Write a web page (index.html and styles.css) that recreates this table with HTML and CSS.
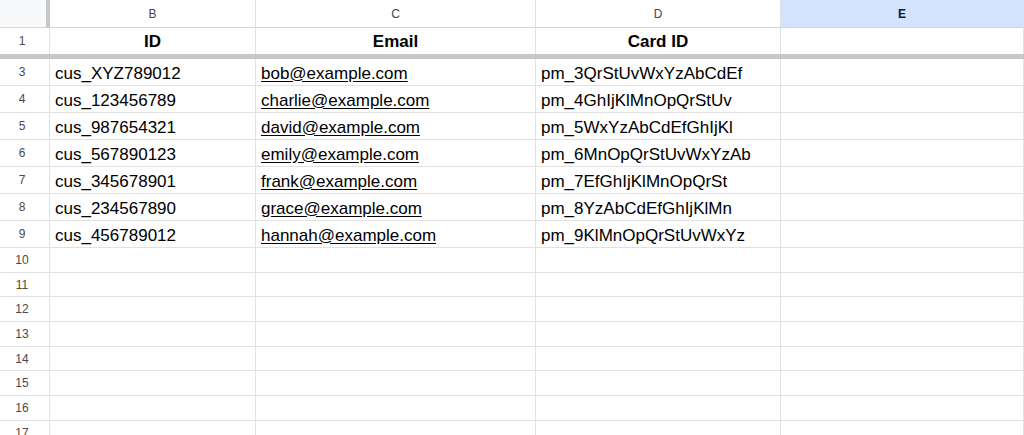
FILE: index.html
```html
<!DOCTYPE html>
<html>
<head>
<meta charset="utf-8">
<link rel="stylesheet" href="styles.css">
</head>
<body>
<div class="sheet">
  <div class="row colhead">
    <div class="cell corner"></div>
    <div class="cell ch">B</div>
    <div class="cell ch">C</div>
    <div class="cell ch">D</div>
    <div class="cell ch sel">E</div>
  </div>
  <div class="row r-head">
    <div class="cell rn">1</div>
    <div class="cell th">ID</div>
    <div class="cell th">Email</div>
    <div class="cell th">Card ID</div>
    <div class="cell"></div>
  </div>
  <div class="freeze"></div>
  <div class="row data"><div class="cell rn">3</div><div class="cell td">cus_XYZ789012</div><div class="cell td"><span class="link">bob@example.com</span></div><div class="cell td">pm_3QrStUvWxYzAbCdEf</div><div class="cell"></div></div>
  <div class="row data"><div class="cell rn">4</div><div class="cell td">cus_123456789</div><div class="cell td"><span class="link">charlie@example.com</span></div><div class="cell td">pm_4GhIjKlMnOpQrStUv</div><div class="cell"></div></div>
  <div class="row data"><div class="cell rn">5</div><div class="cell td">cus_987654321</div><div class="cell td"><span class="link">david@example.com</span></div><div class="cell td">pm_5WxYzAbCdEfGhIjKl</div><div class="cell"></div></div>
  <div class="row data"><div class="cell rn">6</div><div class="cell td">cus_567890123</div><div class="cell td"><span class="link">emily@example.com</span></div><div class="cell td">pm_6MnOpQrStUvWxYzAb</div><div class="cell"></div></div>
  <div class="row data"><div class="cell rn">7</div><div class="cell td">cus_345678901</div><div class="cell td"><span class="link">frank@example.com</span></div><div class="cell td">pm_7EfGhIjKlMnOpQrSt</div><div class="cell"></div></div>
  <div class="row data"><div class="cell rn">8</div><div class="cell td">cus_234567890</div><div class="cell td"><span class="link">grace@example.com</span></div><div class="cell td">pm_8YzAbCdEfGhIjKlMn</div><div class="cell"></div></div>
  <div class="row data"><div class="cell rn">9</div><div class="cell td">cus_456789012</div><div class="cell td"><span class="link">hannah@example.com</span></div><div class="cell td">pm_9KlMnOpQrStUvWxYz</div><div class="cell"></div></div>
  <div class="row empty"><div class="cell rn">10</div><div class="cell"></div><div class="cell"></div><div class="cell"></div><div class="cell"></div></div>
  <div class="row empty"><div class="cell rn">11</div><div class="cell"></div><div class="cell"></div><div class="cell"></div><div class="cell"></div></div>
  <div class="row empty"><div class="cell rn">12</div><div class="cell"></div><div class="cell"></div><div class="cell"></div><div class="cell"></div></div>
  <div class="row empty"><div class="cell rn">13</div><div class="cell"></div><div class="cell"></div><div class="cell"></div><div class="cell"></div></div>
  <div class="row empty"><div class="cell rn">14</div><div class="cell"></div><div class="cell"></div><div class="cell"></div><div class="cell"></div></div>
  <div class="row empty"><div class="cell rn">15</div><div class="cell"></div><div class="cell"></div><div class="cell"></div><div class="cell"></div></div>
  <div class="row empty"><div class="cell rn">16</div><div class="cell"></div><div class="cell"></div><div class="cell"></div><div class="cell"></div></div>
  <div class="row empty"><div class="cell rn">17</div><div class="cell"></div><div class="cell"></div><div class="cell"></div><div class="cell"></div></div>
</div>
</body>
</html>
```
FILE: styles.css
```css
* { box-sizing: border-box; }
html, body {
  margin: 0;
  padding: 0;
  background: #fff;
  overflow: hidden;
}
body {
  font-family: "Liberation Sans", Arial, sans-serif;
  color: #000;
}
.sheet {
  width: 1024px;
  height: 435px;
  overflow: hidden;
}
.row {
  display: grid;
  grid-template-columns: 50px 206px 280px 245px 1fr;
}
.cell {
  border-right: 1px solid #e1e1e1;
  border-bottom: 1px solid #e1e1e1;
  display: flex;
  align-items: center;
  overflow: hidden;
  white-space: nowrap;
}
.colhead { height: 28px; }
.colhead .cell {
  border-bottom-color: #d6d6d6;
}
.corner {
  background: #f8f9fa;
  border-right: 4px solid #c7c7c7 !important;
}
.ch {
  justify-content: center;
  font-size: 12px;
  color: #444746;
  padding-top: 1px;
}
.ch.sel {
  background: #d3e3fd;
  color: #0b1b44;
  font-weight: bold;
}
.r-head { height: 26px; }
.r-head .cell { border-bottom: none; }
.th {
  justify-content: center;
  font-size: 17px;
  font-weight: bold;
  padding-top: 2px;
}
.freeze {
  height: 5px;
  background: #c7c7c7;
}
.rn {
  justify-content: center;
  padding-right: 5px;
  font-size: 12px;
  color: #4a4a4a;
}
.data { height: 27px; }
.empty { height: 24.7px; }
.td {
  font-size: 17px;
  padding-left: 5px;
  padding-top: 3px;
}
.link {
  text-decoration: underline;
  text-underline-offset: 2px;
}
```
